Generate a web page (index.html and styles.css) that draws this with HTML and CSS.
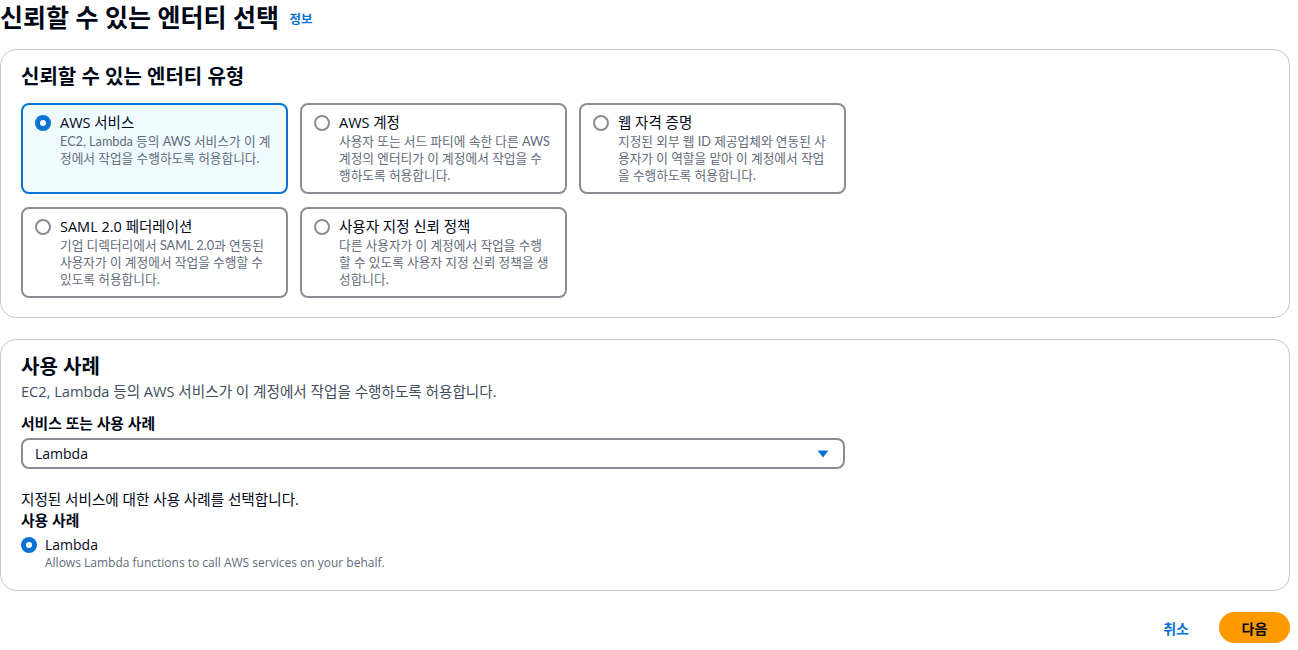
FILE: index.html
```html
<!DOCTYPE html>
<html lang="ko">
<head>
  <meta charset="UTF-8">
  <title>신뢰할 수 있는 엔터티 선택</title>
  <link rel="stylesheet" href="styles.css">
</head>
<body>
<div class="page">
  <h1 class="title">신뢰할 수 있는 엔터티 선택 <a class="info" href="#">정보</a></h1>

  <div class="panel">
    <h2>신뢰할 수 있는 엔터티 유형</h2>
    <div class="tiles">
      <label class="tile selected">
        <span class="radio on"></span>
        <span class="tile-body">
          <span class="tile-title">AWS 서비스</span>
          <span class="tile-desc">EC2, Lambda 등의 AWS 서비스가 이 계정에서 작업을 수행하도록 허용합니다.</span>
        </span>
      </label>
      <label class="tile">
        <span class="radio"></span>
        <span class="tile-body">
          <span class="tile-title">AWS 계정</span>
          <span class="tile-desc">사용자 또는 서드 파티에 속한 다른 AWS 계정의 엔터티가 이 계정에서 작업을 수행하도록 허용합니다.</span>
        </span>
      </label>
      <label class="tile">
        <span class="radio"></span>
        <span class="tile-body">
          <span class="tile-title">웹 자격 증명</span>
          <span class="tile-desc">지정된 외부 웹 ID 제공업체와 연동된 사용자가 이 역할을 맡아 이 계정에서 작업을 수행하도록 허용합니다.</span>
        </span>
      </label>
      <label class="tile">
        <span class="radio"></span>
        <span class="tile-body">
          <span class="tile-title">SAML 2.0 페더레이션</span>
          <span class="tile-desc">기업 디렉터리에서 SAML 2.0과 연동된 사용자가 이 계정에서 작업을 수행할 수 있도록 허용합니다.</span>
        </span>
      </label>
      <label class="tile">
        <span class="radio"></span>
        <span class="tile-body">
          <span class="tile-title">사용자 지정 신뢰 정책</span>
          <span class="tile-desc">다른 사용자가 이 계정에서 작업을 수행할 수 있도록 사용자 지정 신뢰 정책을 생성합니다.</span>
        </span>
      </label>
    </div>
  </div>

  <div class="panel">
    <h2>사용 사례</h2>
    <p class="desc">EC2, Lambda 등의 AWS 서비스가 이 계정에서 작업을 수행하도록 허용합니다.</p>
    <div class="field-label">서비스 또는 사용 사례</div>
    <div class="select">
      <span>Lambda</span>
      <svg width="12" height="8" viewBox="0 0 12 8"><path d="M0.5 0.5h11L6 7.5z" fill="#0972d3"/></svg>
    </div>
    <p class="hint">지정된 서비스에 대한 사용 사례를 선택합니다.</p>
    <div class="field-label">사용 사례</div>
    <label class="option">
      <span class="radio on"></span>
      <span class="tile-body">
        <span class="option-title">Lambda</span>
        <span class="option-desc">Allows Lambda functions to call AWS services on your behalf.</span>
      </span>
    </label>
  </div>

  <div class="actions">
    <a class="cancel" href="#">취소</a>
    <button class="primary">다음</button>
  </div>
</div>
</body>
</html>
```

FILE: styles.css
```css
body { margin: 0; font-family: "Open Sans", "Noto Sans CJK KR", sans-serif; color: #000716; background: #fff; font-size: 14px; }
.page { width: 1290px; }
.title { margin: 0 0 15px; font-size: 25px; line-height: 34px; font-weight: 700; }
.info { font-size: 12.5px; line-height: 1; color: #0972d3; text-decoration: none; font-weight: 700; vertical-align: 3px; margin-left: 4px; }
.panel { border: 1px solid #c6c6cd; border-radius: 16px; padding: 15px 20px 19px; margin-bottom: 21px; }
.panel h2 { margin: 0; font-size: 20px; line-height: 24px; font-weight: 700; }
.tiles { display: grid; grid-template-columns: repeat(3, 267px); gap: 13px 12px; margin-top: 14px; }
.tile { display: flex; align-items: flex-start; border: 2px solid #8c8c94; border-radius: 8px; padding: 8px 13px 8px 12px; height: 91px; box-sizing: border-box; cursor: pointer; }
.tile.selected { border-color: #0972d3; background: #f0fbff; }
.radio { flex: none; width: 16px; height: 16px; box-sizing: border-box; border: 2px solid #8c8c94; border-radius: 50%; margin: 2px 9px 0 0; background: #fff; }
.radio.on { border: 5px solid #0972d3; }
.tile-body { display: flex; flex-direction: column; }
.tile-title { font-size: 14.5px; line-height: 20px; }
.tile-desc { font-family: Lato, "Noto Sans CJK KR", sans-serif; font-size: 12.7px; line-height: 17px; color: #5f6b7a; }
.panel .desc { margin: 2px 0 12px; font-size: 14.6px; line-height: 20px; color: #414d5c; }
.field-label { font-weight: 700; font-size: 14.8px; line-height: 20px; }
.select { margin-top: 5px; width: 824px; height: 31px; box-sizing: border-box; border: 2px solid #8c8c94; border-radius: 8px; display: flex; align-items: center; justify-content: space-between; padding: 0 14px 0 12px; }
.hint { margin: 20px 0 1px; font-size: 14.6px; line-height: 20px; }
.option { display: flex; align-items: flex-start; margin-top: 5px; }
.option-title { font-size: 14px; line-height: 20px; }
.option-desc { font-size: 12px; line-height: 16px; color: #5f6b7a; }
.option .radio { margin-top: 2px; margin-right: 8px; }
.actions { display: flex; justify-content: flex-end; align-items: center; gap: 30px; }
.cancel { color: #0972d3; font-weight: 700; text-decoration: none; }
.primary { background: #ff9900; border: none; border-radius: 16px; height: 31px; width: 71px; font: inherit; font-weight: 700; color: #000716; cursor: pointer; }
```
